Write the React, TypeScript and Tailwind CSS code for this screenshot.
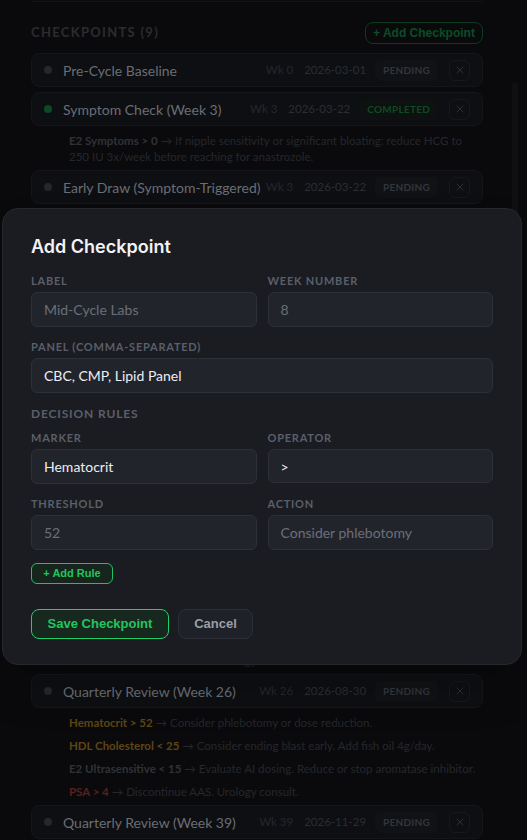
import React from 'react';
import { X } from 'lucide-react';

type Rule = { marker: string; action: string; tone: 'gray' | 'amber' | 'red'; nowrap?: boolean };
type Checkpoint = {
  label: string;
  week: number;
  date: string;
  status: 'PENDING' | 'COMPLETED';
  rules?: Rule[];
  spaced?: boolean;
};

const checkpoints: Checkpoint[] = [
  { label: 'Pre-Cycle Baseline', week: 0, date: '2026-03-01', status: 'PENDING' },
  {
    label: 'Symptom Check (Week 3)',
    week: 3,
    date: '2026-03-22',
    status: 'COMPLETED',
    rules: [
      {
        marker: 'E2 Symptoms > 0',
        action:
          'If nipple sensitivity or significant bloating: reduce HCG to 250 IU 3x/week before reaching for anastrozole.',
        tone: 'gray',
      },
    ],
  },
  {
    label: 'Early Draw (Symptom-Triggered)',
    week: 3,
    date: '2026-03-22',
    status: 'PENDING',
    rules: [
      { marker: 'E2 Ultrasensitive > 50', action: 'Add anastrozole 0.25mg E3D.', tone: 'amber' },
      { marker: 'Prolactin > 25', action: 'Add cabergoline 0.25mg 2x/week.', tone: 'amber' },
      { marker: 'Hematocrit > 52', action: 'Consider phlebotomy.', tone: 'amber' },
    ],
  },
  {
    label: 'Mid-Cycle Labs (Week 6)',
    week: 6,
    date: '2026-04-12',
    status: 'PENDING',
    rules: [
      { marker: 'Hematocrit > 52', action: 'Consider phlebotomy or dose reduction.', tone: 'amber' },
      { marker: 'ALT > 120', action: 'Drop oral compound. Add TUDCA.', tone: 'red' },
      { marker: 'E2 Ultrasensitive > 50', action: 'Add anastrozole 0.25mg E3D.', tone: 'gray' },
    ],
  },
  {
    label: 'Mid-Cycle Labs (Week 10)',
    week: 10,
    date: '2026-05-10',
    status: 'PENDING',
    rules: [
      { marker: 'ALT > 120', action: 'Drop oral compound. Add TUDCA 500mg/day.', tone: 'red' },
      { marker: 'HDL Cholesterol < 25', action: 'Add fish oil 4g/day.', tone: 'amber' },
    ],
  },
  {
    label: 'End of Blast (Week 16)',
    week: 16,
    date: '2026-06-21',
    status: 'PENDING',
    rules: [
      { marker: 'Hematocrit > 52', action: 'Consider phlebotomy or dose reduction.', tone: 'amber' },
      { marker: 'LH < 1', action: 'Begin PCT protocol on schedule.', tone: 'gray' },
      { marker: 'FSH < 1', action: 'Add HCG bridge before PCT.', tone: 'gray' },
    ],
  },
  {
    label: 'Post-PCT Labs (Week 22)',
    week: 22,
    date: '2026-08-02',
    status: 'PENDING',
    spaced: true,
    rules: [
      { marker: 'Total Testosterone < 300', action: 'Extend PCT by 2 weeks.', tone: 'gray' },
      { marker: 'PSA > 4', action: 'Discontinue AAS. Urology consult.', tone: 'red' },
    ],
  },
  {
    label: 'Quarterly Review (Week 26)',
    week: 26,
    date: '2026-08-30',
    status: 'PENDING',
    rules: [
      { marker: 'Hematocrit > 52', action: 'Consider phlebotomy or dose reduction.', tone: 'amber' },
      { marker: 'HDL Cholesterol < 25', action: 'Consider ending blast early. Add fish oil 4g/day.', tone: 'amber' },
      {
        marker: 'E2 Ultrasensitive < 15',
        action: 'Evaluate AI dosing. Reduce or stop aromatase inhibitor.',
        tone: 'gray',
        nowrap: true,
      },
      { marker: 'PSA > 4', action: 'Discontinue AAS. Urology consult.', tone: 'red' },
    ],
  },
  { label: 'Quarterly Review (Week 39)', week: 39, date: '2026-11-29', status: 'PENDING' },
];

const toneClass = {
  gray: 'text-[#303238]',
  amber: 'text-[#5e4512]',
  red: 'text-[#5a1f1f]',
};

function CheckpointRow({ cp }: { cp: Checkpoint }) {
  const done = cp.status === 'COMPLETED';
  return (
    <div className={cp.spaced ? 'mt-[10px]' : ''}>
      <div className="flex h-[34px] items-center rounded-lg border border-[#15161a] bg-[#0e0f12] pl-[12px] pr-[12px]">
        <span className={`h-[8px] w-[8px] shrink-0 rounded-full ${done ? 'bg-[#0c4a22]' : 'bg-[#25272d]'}`} />
        <span className="ml-[11px] whitespace-nowrap text-[14px] text-[#6a6d74]">{cp.label}</span>
        <span className="ml-auto whitespace-nowrap text-[11.5px] text-[#25272c]">Wk {cp.week}</span>
        <span className="ml-[11px] text-[11.5px] text-[#2b2d32]">{cp.date}</span>
        <span
          className={`ml-[9px] rounded-md px-[8px] py-[3px] text-[10px] font-bold tracking-wide ${
            done ? 'bg-[#0d110f] text-[#0d4a25]' : 'bg-[#111215] text-[#33363c]'
          }`}
        >
          {cp.status}
        </span>
        <span className="ml-[11px] flex h-[21px] w-[21px] shrink-0 items-center justify-center rounded-md border border-[#17181c] text-[#303237]">
          <X size={12} strokeWidth={1.75} />
        </span>
      </div>
      {cp.rules && (
        <div className="flex flex-col gap-[7px] pl-[38px] pr-[14px] pt-[7px] text-[11.5px] leading-[16px]">
          {cp.rules.map((r, i) => (
            <div key={i} className={`text-[#25272c] ${r.nowrap ? 'whitespace-nowrap' : ''}`}>
              <span className={`font-bold ${toneClass[r.tone]}`}>{r.marker}</span>
              <span> → {r.action}</span>
            </div>
          ))}
        </div>
      )}
    </div>
  );
}

function Field({
  label,
  value,
  placeholder,
  short,
}: {
  label: string;
  value?: string;
  placeholder?: string;
  short?: boolean;
}) {
  return (
    <div className="flex flex-col">
      <label className="mb-[5px] text-[11px] font-bold uppercase leading-[13px] tracking-[0.07em] text-[#5a5f6a]">
        {label}
      </label>
      <div
        className={`flex items-center rounded-md border border-[#2d3038] bg-[#22242c] px-[12px] text-[14px] ${
          short ? 'h-[34px]' : 'h-[35px]'
        }`}
      >
        {value ? (
          <span className="text-[#eceef2]">{value}</span>
        ) : (
          <span className="text-[#6b6f79]">{placeholder}</span>
        )}
      </div>
    </div>
  );
}

export default function App() {
  return (
    <div
      className="relative h-[840px] w-full overflow-hidden bg-[#0a0a0c]"
      style={{ fontFamily: 'Lato, "Noto Sans", sans-serif' }}
    >
      {/* page behind the modal */}
      <div className="pl-[31px] pr-[44px]">
        <div className="h-[2px] rounded-b-lg border-x border-b border-[#131417]" />
        <div className="mt-[20px] flex items-center justify-between">
          <h2 className="text-[13px] font-bold tracking-[0.1em] text-[#2a2c31]">CHECKPOINTS (9)</h2>
          <button
            className="h-[22px] w-[118px] rounded-lg border border-[#0c3a1f] text-[12px] font-bold text-[#0c4c27]"
            style={{ fontFamily: '"Liberation Sans", Arial, sans-serif' }}
          >
            + Add Checkpoint
          </button>
        </div>
        <div className="mt-[9px] flex flex-col gap-[5px]">
          {checkpoints.map((cp) => (
            <CheckpointRow key={cp.label} cp={cp} />
          ))}
        </div>
      </div>
      <div className="absolute right-[9px] top-[82px] h-[300px] w-[6px] rounded-full bg-[#0f1012]" />

      {/* modal */}
      <div className="absolute left-[2px] top-[208px] w-[520px] rounded-2xl border border-[#26282e] bg-[#1b1c21] px-[28px] pb-[25px] pt-[24px] shadow-2xl">
        <h3
          className="text-[18px] font-semibold leading-[28px] text-[#f2f3f5]"
          style={{ fontFamily: 'Inter, sans-serif' }}
        >
          Add Checkpoint
        </h3>
        <div className="mt-[13px] grid grid-cols-2 gap-x-[11px]">
          <Field label="Label" placeholder="Mid-Cycle Labs" />
          <Field label="Week Number" placeholder="8" />
        </div>
        <div className="mt-[13px]">
          <Field label="Panel (comma-separated)" value="CBC, CMP, Lipid Panel" />
        </div>
        <div className="mt-[13px] text-[12px] font-bold uppercase leading-[16px] tracking-[0.07em] text-[#5a5f6a]">
          Decision Rules
        </div>
        <div className="mt-[9px] grid grid-cols-2 items-start gap-x-[11px] gap-y-[13px]">
          <Field label="Marker" value="Hematocrit" />
          <Field label="Operator" value=">" short />
          <Field label="Threshold" placeholder="52" />
          <Field label="Action" placeholder="Consider phlebotomy" />
        </div>
        <div
          className="mt-[13px] flex"
          style={{ fontFamily: '"Liberation Sans", Arial, sans-serif' }}
        >
          <button className="h-[21px] w-[82px] rounded-md border border-[#1cc363] bg-[#16261d] text-[11px] font-bold text-[#22c55e]">
            + Add Rule
          </button>
        </div>
        <div
          className="mt-[25px] flex gap-[9px]"
          style={{ fontFamily: '"Liberation Sans", Arial, sans-serif' }}
        >
          <button className="h-[30px] w-[138px] rounded-lg border border-[#1fcf69] bg-[#17291f] text-[13px] font-bold text-[#22c55e]">
            Save Checkpoint
          </button>
          <button className="h-[30px] w-[75px] rounded-lg border border-[#2c2f37] bg-[#1f2128] text-[13px] font-bold text-[#9a9ea8]">
            Cancel
          </button>
        </div>
      </div>
    </div>
  );
}
